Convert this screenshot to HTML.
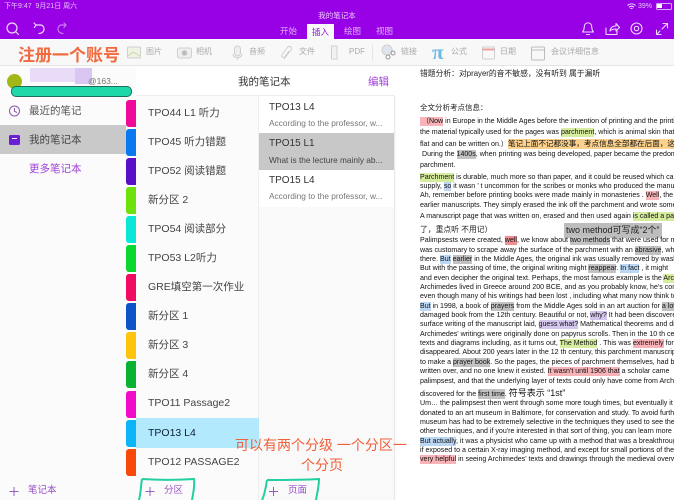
<!DOCTYPE html>
<html><head><meta charset="utf-8">
<style>
html,body{margin:0;padding:0;width:674px;height:500px;overflow:hidden;background:#fff}
body{font-family:"Liberation Sans","Noto Sans CJK SC",sans-serif;position:relative;filter:blur(.3px)}
.a{position:absolute;white-space:nowrap}
.l{position:absolute;left:420px;width:254px;overflow:hidden;white-space:nowrap;font-size:7.07px;line-height:10px;height:10px;color:#111}
.s{position:absolute;left:148px;font-size:10.500px;line-height:14px;color:#444;white-space:nowrap}
.t{position:absolute;left:126px;width:10px;height:27px;border-radius:3px 0 0 3px}
.tb{position:absolute;top:46px;font-size:8px;line-height:12px;color:#aaa;white-space:nowrap}
.r,.g,.h,.b,.p,.o{padding:1px 0}
.r{background:#f7b3b8}.g{background:#d6ec9e}.h{background:#c2c2c2}.b{background:#bcd7f4}.p{background:#d5c6ee}.o{background:#fbd18c}
svg{position:absolute;overflow:hidden}
</style></head><body>
<!-- top bar -->
<div class="a" style="left:0;top:0;width:674px;height:39px;background:#9800e6"></div>
<div class="a" style="left:4px;top:1px;font-size:7px;line-height:11px;color:#e6c4fa">下午9:47&nbsp;&nbsp;9月21日 周六</div>
<div class="a" style="left:307px;top:11px;width:60px;text-align:center;font-size:7.5px;line-height:10px;color:#eccbfb">我的笔记本</div>
<div class="a" style="left:638px;top:1px;font-size:7px;line-height:11px;color:#e6c4fa">39%</div>
<svg style="left:627px;top:3px" width="9" height="7" fill="none" stroke="#f0dcfc" stroke-width="1"><path d="M.5 2.500C3 .3 6 .3 8.500 2.500M2 4.200C3.500 3 5.500 3 7 4.200M3.500 5.800C4.200 5.200 4.800 5.200 5.500 5.800"/></svg>
<div class="a" style="left:656px;top:3px;width:14px;height:5px;border:.5px solid #d9a8f5;border-radius:1.500px"></div>
<div class="a" style="left:657px;top:4px;width:5px;height:4px;background:#fff"></div>
<svg style="left:0;top:0" width="80" height="39" fill="none" stroke="#f0d8fc" stroke-width="1.200" stroke-linecap="round" stroke-linejoin="round"><circle cx="12" cy="28" r="5"/><path d="M15.500 31.500L18.500 34.500"/><path d="M36 25H40.500C43 25 44 27.500 44 29C44 31.500 42 33.500 39 33.500"/><path d="M36 25L34.500 27.500M36 25L34 23"/><g stroke="#c77bf0"><path d="M66 25H61.500C59 25 58 27.500 58 29C58 31.500 60 33.500 63 33.500"/><path d="M66 25L64 23M66 25L64 27.500"/></g></svg>
<div class="a" style="left:280px;top:25px;font-size:8.500px;line-height:12px;color:#dfb3f7">开始</div>
<div class="a" style="left:307px;top:24px;width:27px;height:15px;background:#f9f9f9;text-align:center;font-size:8.500px;line-height:16px;color:#9010d8">插入</div>
<div class="a" style="left:344px;top:25px;font-size:8.500px;line-height:12px;color:#dfb3f7">绘图</div>
<div class="a" style="left:376px;top:25px;font-size:8.500px;line-height:12px;color:#dfb3f7">视图</div>
<svg style="left:0;top:0" width="674" height="39" fill="none" stroke="#f0d8fc" stroke-width="1.100" stroke-linecap="round" stroke-linejoin="round">
<path d="M582.500 32C584.500 30.500 584 27 584.500 25.500C585.500 22 590.500 22 591.500 25.500C592 27 591.500 30.500 593.500 32Z"/><path d="M586.500 34.500H589.500"/>
<path d="M606 28V34.500H617V31"/><path d="M610 31C610.500 27.500 613 26 616 26V23.500L619.500 27.500L616 31V29C613.500 29 611.500 29.500 610 31Z"/>
<circle cx="636.500" cy="28.500" r="2.200"/><circle cx="636.500" cy="28.500" r="5.500"/>
<path d="M662 29L667 24M663 23.500H667.500V28M656.500 30V34.500H661M656.500 34.500L660 31"/>
</svg>
<!-- toolbar -->
<div class="a" style="left:0;top:39px;width:674px;height:27px;background:#f8f8f8;border-bottom:1px solid #e6e6e6;box-sizing:border-box"></div>
<svg style="left:0;top:39px" width="674" height="27" fill="none" stroke="#cfcfcf" stroke-width="1">
<rect x="127.500" y="8" width="13" height="11" rx="1" fill="#eef3e4"/><path d="M128 17L133 13L140 17" stroke="#c8d8b0"/>
<rect x="177.500" y="9" width="14" height="10" rx="2" fill="#efefef"/><circle cx="184.500" cy="14" r="2.500" fill="#bbb"/>
<rect x="234.500" y="7" width="6" height="10" rx="3" fill="#efefef"/><path d="M233 15C233 20 242 20 242 15M237.500 19V21"/>
<path d="M284 20L291 11C293 8 289 6 287 9L282 16C281 18 283 19 284.500 18L289 12"/>
<path d="M331.500 7H337V20H331.500Z" fill="#f2f2f2"/>
<path d="M372.500 5V22" stroke="#e6e6e6"/>
<circle cx="387" cy="11" r="5" fill="#dfe6ee"/><circle cx="388" cy="18" r="2" stroke="#999"/><circle cx="393" cy="14" r="2" stroke="#999"/>
<rect x="482.500" y="8" width="12" height="12" rx="1"/><path d="M482.500 10.500H494.500" stroke="#eba0a0" stroke-width="2"/>
<rect x="531.500" y="8" width="13" height="13" rx="1" stroke="#bbb"/><path d="M531.500 11H544.500" stroke="#bbb"/>
</svg>
<div class="a" style="left:432px;top:41px;font:bold 21px/22px 'Liberation Serif','Noto Serif CJK SC',serif;color:#6db8e8">π</div>
<div class="tb" style="left:146px">图片</div><div class="tb" style="left:196px">相机</div><div class="tb" style="left:249px">音频</div><div class="tb" style="left:299px">文件</div><div class="tb" style="left:349px">PDF</div><div class="tb" style="left:401px">链接</div><div class="tb" style="left:451px">公式</div><div class="tb" style="left:500px">日期</div><div class="tb" style="left:551px">会议详细信息</div>
<div class="a" style="left:18px;top:46px;font-size:17px;line-height:20px;font-weight:bold;color:#ef6a3e">注册一个账号</div>
<!-- left pane -->
<div class="a" style="left:0;top:66px;width:136px;height:434px;background:#fbfbfb"></div>
<div class="a" style="left:0;top:125px;width:126px;height:29px;background:#c9c9c9"></div>
<div class="a" style="left:30px;top:68px;width:62px;height:14px;background:#e9dcf8"></div>
<div class="a" style="left:75px;top:68px;width:17px;height:16px;background:#d9c6f2"></div>
<div class="a" style="left:88px;top:76px;font-size:8.500px;line-height:11px;color:#777">@163...</div>
<div class="a" style="left:7px;top:74px;width:15px;height:15px;border-radius:50%;background:#a3b816"></div>
<div class="a" style="left:11px;top:86px;width:119px;height:9px;background:#1fd8aa;border:1px solid #1d6d5d;border-radius:5px"></div>
<svg style="left:0;top:96px" width="30" height="60" fill="none" stroke="#8a5aa8" stroke-width="1"><circle cx="14.500" cy="15" r="5"/><path d="M14.500 12V15.300L17 16.500"/></svg>
<div class="a" style="left:9px;top:135px;width:11px;height:10px;background:#6a1ed6;border-radius:1.500px"></div>
<div class="a" style="left:12px;top:138px;width:5px;height:1px;background:#fff"></div>
<div class="a" style="left:29px;top:104px;font-size:10.500px;line-height:14px;color:#555">最近的笔记</div>
<div class="a" style="left:29px;top:133px;font-size:10.500px;line-height:14px;color:#444">我的笔记本</div>
<div class="a" style="left:29px;top:162px;font-size:10.500px;line-height:14px;color:#a040d8">更多笔记本</div>
<div class="a" style="left:28px;top:485px;font-size:9.500px;line-height:12px;color:#9a50c8">笔记本</div>
<!-- tabs -->
<div class="t" style="top:100px;background:#f00a9a"></div>
<div class="t" style="top:129px;background:#0a78ee"></div>
<div class="t" style="top:158px;background:#5a0ec8"></div>
<div class="t" style="top:187px;background:#6ee00c"></div>
<div class="t" style="top:216px;background:#0ae6d8"></div>
<div class="t" style="top:245px;background:#0ad82e"></div>
<div class="t" style="top:274px;background:#f00c62"></div>
<div class="t" style="top:303px;background:#0c54c8"></div>
<div class="t" style="top:332px;background:#fcc40a"></div>
<div class="t" style="top:361px;background:#0ab232"></div>
<div class="t" style="top:391px;background:#f00cc8"></div>
<div class="t" style="top:420px;background:#0cb4fa"></div>
<div class="t" style="top:449px;background:#f8480a"></div>
<!-- section col -->
<div class="a" style="left:136px;top:96px;width:123px;height:404px;background:#fbfbfb;box-shadow:inset -1px 0 0 #eee"></div>
<div class="a" style="left:136px;top:66px;width:258px;height:30px;background:#fff;border-bottom:1px solid #eee;box-sizing:border-box"></div>
<div class="a" style="left:136px;top:418px;width:123px;height:30px;background:#b2e9fc"></div>
<div class="a" style="left:238px;top:75px;font-size:10.500px;line-height:14px;color:#333">我的笔记本</div>
<div class="a" style="left:368px;top:75px;font-size:10.500px;line-height:14px;color:#a040d8">编辑</div>
<div class="s" style="top:106px">TPO44 L1 听力</div>
<div class="s" style="top:135px">TPO45 听力错题</div>
<div class="s" style="top:164px">TPO52 阅读错题</div>
<div class="s" style="top:193px">新分区 2</div>
<div class="s" style="top:222px">TPO54 阅读部分</div>
<div class="s" style="top:251px">TPO53 L2听力</div>
<div class="s" style="top:280px">GRE填空第一次作业</div>
<div class="s" style="top:309px">新分区 1</div>
<div class="s" style="top:338px">新分区 3</div>
<div class="s" style="top:367px">新分区 4</div>
<div class="s" style="top:396px">TPO11 Passage2</div>
<div class="s" style="top:426px;color:#123">TPO13 L4</div>
<div class="s" style="top:455px">TPO12 PASSAGE2</div>
<!-- page col -->
<div class="a" style="left:259px;top:96px;width:135px;height:404px;background:#f9f9f9;box-shadow:1px 0 1px #e4e4e4"></div>
<div class="a" style="left:259px;top:96px;width:135px;height:37px;background:#fff"></div>
<div class="a" style="left:259px;top:170px;width:135px;height:37px;background:#fff"></div>
<div class="a" style="left:259px;top:133px;width:135px;height:37px;background:#c8c8c8"></div>
<div class="a" style="left:269px;top:101px;font-size:10px;line-height:14px;color:#333">TPO13 L4</div>
<div class="a" style="left:269px;top:117px;font-size:8.300px;line-height:12px;color:#777">According to the professor, w...</div>
<div class="a" style="left:269px;top:137px;font-size:10px;line-height:14px;color:#333">TPO15 L1</div>
<div class="a" style="left:269px;top:154px;font-size:8.300px;line-height:12px;color:#444">What is the lecture mainly ab...</div>
<div class="a" style="left:269px;top:174px;font-size:10px;line-height:14px;color:#333">TPO15 L4</div>
<div class="a" style="left:269px;top:190px;font-size:8.300px;line-height:12px;color:#777">According to the professor, w...</div>
<div class="a" style="left:164px;top:485px;font-size:9.500px;line-height:12px;color:#9a50c8">分区</div>
<div class="a" style="left:288px;top:485px;font-size:9.500px;line-height:12px;color:#9a50c8">页面</div>
<svg style="left:0;top:484px" width="330" height="16" fill="none" stroke="#9060c0" stroke-width="1"><path d="M9.500 7.500H18.500M14 3V12"/><path d="M145.500 7.500H154.500M150 3V12"/><path d="M269 7.500H278M273.500 3V12"/></svg>
<svg style="left:0;top:470px" width="400" height="30" fill="none" stroke="#22cfa0" stroke-width="2"><path d="M142 9C158 10 178 10 194 9C195 16 193 24 192 30M142 9C141 14 141 22 139 30"/><path d="M267 10C284 10 302 10 319 9C319 16 317 24 316 30M267 10C266 16 265 24 262 30"/></svg>
<!-- annotation -->
<div class="a" style="left:235px;top:437px;font-size:14px;line-height:17px;color:#f0603a;z-index:3">可以有两个分级 一个分区一</div>
<div class="a" style="left:301px;top:457px;font-size:14px;line-height:17px;color:#f0603a;z-index:3">个分页</div>
<!-- note -->
<div class="a" style="left:420px;top:68px;font-size:7.800px;line-height:12px;color:#222">错题分析：对prayer的音不敏感，没有听到 属于漏听</div>
<div class="a" style="left:420px;top:102px;font-size:7.500px;line-height:12px;color:#222">全文分析考点信息：</div>
<div class="l" style="top:117px"><span class="r">&nbsp;（Now</span> in Europe in the Middle Ages before the invention of printing and the printing press,</div>
<div class="l" style="top:128px">the material typically used for the pages was <span class="g">parchment</span>, which is animal skin that</div>
<div class="l" style="top:139px">flat and can be written on.）<span class="o" style="font-size:7.600px">笔记上面不记都没事，考点信息全部都在后面，这里</span></div>
<div class="l" style="top:150px">&nbsp;During the <span class="h">1400s</span>, when printing was being developed, paper became the predominant</div>
<div class="l" style="top:161px">parchment.</div>
<div class="l" style="top:173px"><span class="g">Parchment</span> is durable, much more so than paper, and it could be reused which came</div>
<div class="l" style="top:182px">supply, <span class="b">so</span> it wasn ’ t uncommon for the scribes or monks who produced the manuscripts</div>
<div class="l" style="top:191px">Ah, remember before printing books were made mainly in monasteries . <span class="r">Well</span>, the</div>
<div class="l" style="top:201px">earlier manuscripts. They simply erased the ink off the parchment and wrote some</div>
<div class="l" style="top:212px">A manuscript page that was written on, erased and then used again <span class="g">is called a palimpsest</span></div>
<div class="a" style="left:420px;top:224px;font-size:7.800px;line-height:12px;color:#222">了，重点听 不用记）</div>
<div class="a" style="left:564px;top:223px;width:98px;height:15px;background:#bdbdbd;font-size:9px;line-height:15px;color:#222;padding-left:2px;box-sizing:border-box;overflow:hidden">two method可写成“2个”</div>
<div class="l" style="top:236px">Palimpsests were created, <span class="r" style="background:#f08f92">well</span>, we know about <span class="h">two methods</span> that were used for making</div>
<div class="l" style="top:246px">was customary to scrape away the surface of the parchment with an <span class="h">abrasive</span>, which</div>
<div class="l" style="top:255px">there. <span class="b">But</span> <span class="h">earlier</span> in the Middle Ages, the original ink was usually removed by washing</div>
<div class="l" style="top:264px">But with the passing of time, the original writing might <span class="h">reappear</span>. <span class="b">In fact</span> , it might</div>
<div class="l" style="top:274px">and even decipher the original text. Perhaps, the most famous example is the <span class="g">Archimedes</span></div>
<div class="l" style="top:283px">Archimedes lived in Greece around 200 BCE, and as you probably know, he's considered</div>
<div class="l" style="top:292px">even though many of his writings had been lost , including what many now think to be</div>
<div class="l" style="top:302px"><span class="b">But</span> in 1998, a book of <span class="h">prayers</span> from the Middle Ages sold in an art auction for <span class="h">a lot</span></div>
<div class="l" style="top:311px">damaged book from the 12th century. Beautiful or not, <span class="p">why?</span> It had been discovered</div>
<div class="l" style="top:320px">surface writing of the manuscript laid, <span class="p">guess what?</span> Mathematical theorems and diagrams</div>
<div class="l" style="top:330px">Archimedes' writings were originally done on papyrus scrolls. Then in the 10 th century</div>
<div class="l" style="top:339px">texts and diagrams including, as it turns out, <span class="g">The Method</span> . This was <span class="r">extremely</span> for</div>
<div class="l" style="top:348px">disappeared. About 200 years later in the 12 th century, this parchment manuscript</div>
<div class="l" style="top:358px">to make a <span class="h">prayer book</span>. So the pages, the pieces of parchment themselves, had been</div>
<div class="l" style="top:367px">written over, and no one knew it existed. <span class="r">It wasn't until 1906 that</span> a scholar came</div>
<div class="l" style="top:377px">palimpsest, and that the underlying layer of texts could only have come from Archimedes</div>
<div class="l" style="top:387px;height:12px;line-height:12px">discovered for the <span class="h" style="padding:2px 0">first time</span>. <span style="font-size:9px">符号表示 “1st”</span></div>
<div class="l" style="top:399px">Um… the palimpsest then went through some more tough times, but eventually it was</div>
<div class="l" style="top:409px">donated to an art museum in Baltimore, for conservation and study. To avoid further</div>
<div class="l" style="top:418px">museum has had to be extremely selective in the techniques they used to see the text</div>
<div class="l" style="top:427px">other techniques, and if you're interested in that sort of thing, you can learn more</div>
<div class="l" style="top:437px"><span class="b">But actually</span>, it was a physicist who came up with a method that was a breakthrough</div>
<div class="l" style="top:446px">if exposed to a certain X-ray imaging method, and except for small portions of the</div>
<div class="l" style="top:455px"><span class="r">very helpful</span> in seeing Archimedes' texts and drawings through the medieval overwriting</div>
</body></html>
